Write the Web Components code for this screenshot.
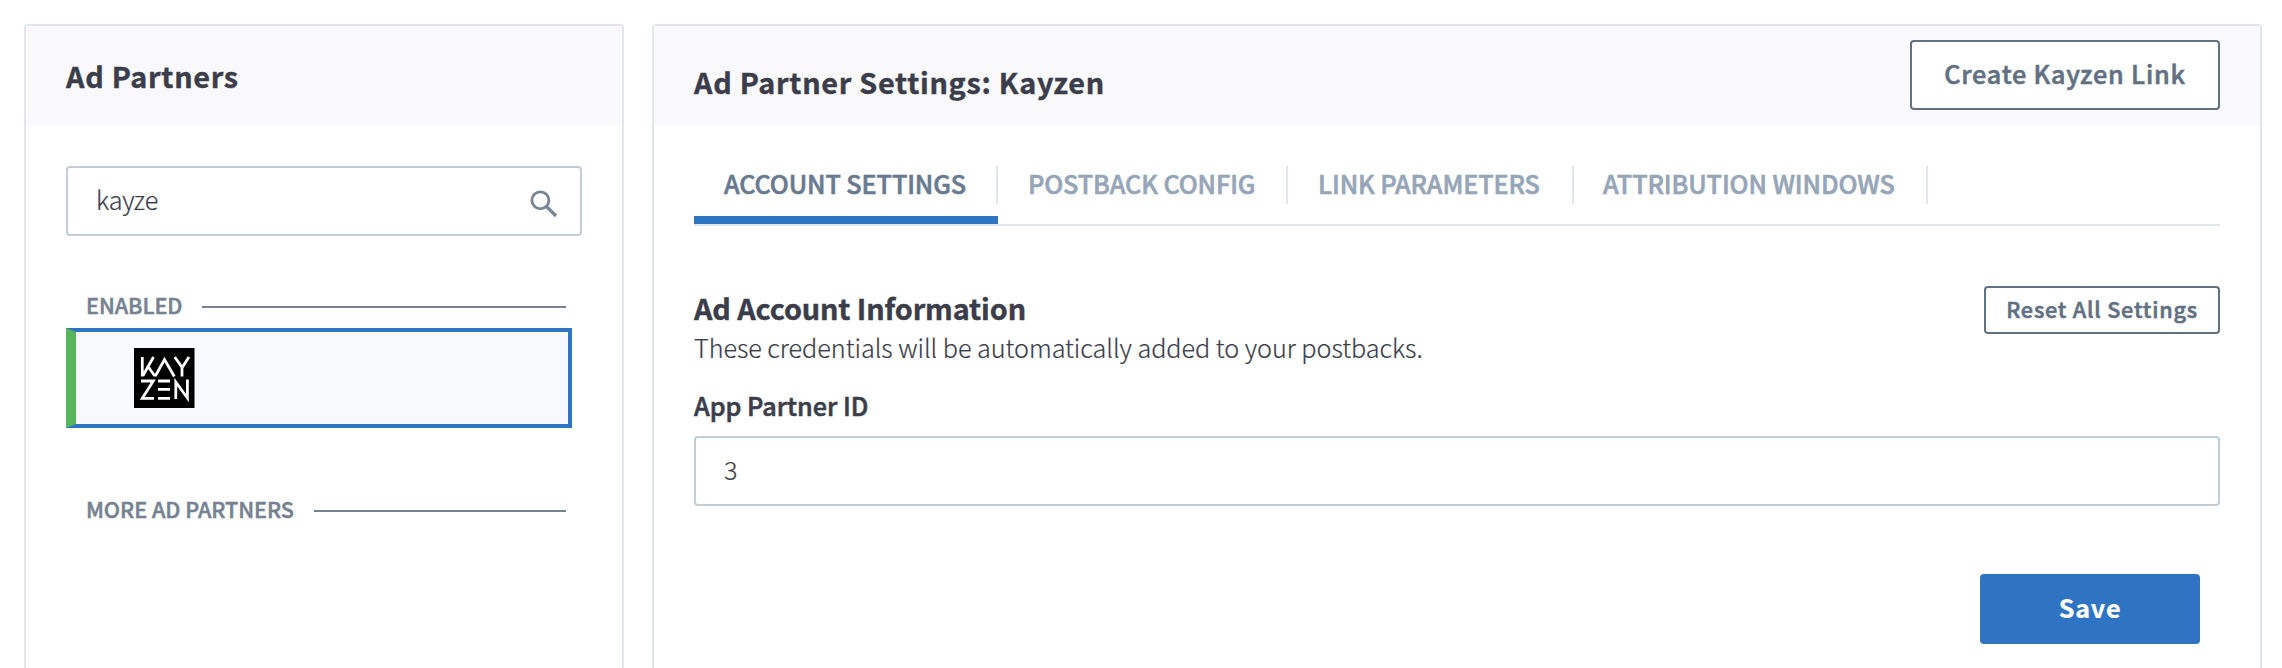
<!DOCTYPE html>
<html lang="en">
<head>
<meta charset="utf-8">
<title>Ad Partners</title>
<style>
html,body{margin:0;height:100%;overflow:hidden;background:#fff}
body{font-family:"Noto Sans CJK SC","Noto Sans",sans-serif;color:#3b3d4a}
</style>
</head>
<body>
<partner-app></partner-app>
<script>
const define=(name,css,html)=>customElements.define(name,class extends HTMLElement{
  constructor(){super();this.attachShadow({mode:'open'}).innerHTML=`<style>*{box-sizing:border-box}${css}</style>${html}`}
});

define('panel-card',`
:host{display:block;box-sizing:border-box;border:2px solid #e1e6ea;border-bottom:0;border-radius:4px 4px 0 0;height:644px}
header{height:100px;background:#f9f9fb;padding:0 40px;display:flex;align-items:center;justify-content:space-between;border-radius:2px 2px 0 0}
.title{font-size:28.8px;font-weight:700;line-height:42px;white-space:nowrap;letter-spacing:.7px;padding-top:var(--drop,0);-webkit-text-stroke:.4px}
.body{padding:40px 40px 0}`,
`<header><div class="title"><slot name="title"></slot></div><slot name="action"></slot></header><div class="body"><slot></slot></div>`);

define('text-box',`
:host{display:flex;box-sizing:border-box;height:70px;border:2px solid #c3cdd7;border-radius:4px;padding:0 22px 5px 28px;align-items:center;justify-content:space-between;font-size:25.2px;font-weight:300;line-height:36px;-webkit-text-stroke:.2px}
span{letter-spacing:-.2px}`,
`<span><slot></slot></span><slot name="icon"></slot>`);

define('search-icon',`:host{display:block;width:28px;height:28px;margin-top:10px}svg{display:block}`,
`<svg width="28" height="28" viewBox="0 0 28 28" fill="none" stroke="#768494"><circle cx="10.4" cy="10.3" r="8.5" stroke-width="2.8"/><path d="M16.4 16.4L26 26" stroke-width="3.300"/></svg>`);

define('section-label',`
:host{display:flex;height:30px;align-items:center;margin:0 16px 0 20px;color:#768191;font-size:21.6px;font-weight:500;line-height:30px;letter-spacing:-.05px}
span{padding-bottom:5px;white-space:nowrap;width:var(--w);-webkit-text-stroke:.5px}i{flex:1;height:2px;background:#768191}`,
`<span><slot></slot></span><i></i>`);

define('kayzen-logo',`:host{display:block;width:61px;height:60px}svg{display:block}`,
`<svg width="61" height="60" viewBox="0 0 61 60"><path d="M0 0h60.5v60H0z" fill="#000"/><g fill="none" stroke="#fff" stroke-width="2.8" stroke-linejoin="miter" stroke-miterlimit="8"><path d="M8.3 9v19.5M19.5 9L9 27.5M14 18.5l6.2 8.7h1.6L30.500 11.5l9.800 17M40.700 9l7.500 10.500L55 9M48 18.500v10"/><path d="M7 33h12.300L8.300 50.300H20M24 33h12M24 41.300h12M24 50.300h12M41.800 51V34l11.600 16V31.500"/></g></svg>`);

define('partner-item',`
:host{display:flex;box-sizing:border-box;height:100px;margin:6px 10px 0 0;border:4px solid #2f74c3;border-left:10px solid #57b65d;background:#f8f9fd;align-items:center;padding-left:58px}`,`<slot></slot>`);

define('tab-item',`
:host{display:flex;flex-direction:column;justify-content:space-between;width:var(--w);height:58px;color:#96a5b8}
:host([active]){color:#697a90}
div{height:38px;border-right:2px solid #e1e6ea;padding-left:var(--pad,30px);font-size:25.2px;font-weight:500;line-height:36px;white-space:nowrap;letter-spacing:-.1px;-webkit-text-stroke:.6px}
span{display:block;margin-top:-1px}
i{height:8px}:host([active]) i{background:#2f74c3}`,`<div><span><slot></slot></span></div><i></i>`);

define('tab-bar',`:host{display:flex;height:60px;box-sizing:border-box;border-bottom:2px solid #e1e6ea}`,`<slot></slot>`);

define('action-button',`
:host{display:flex;box-sizing:border-box;align-items:center;justify-content:center;width:var(--w);height:70px;border:2px solid #627083;border-radius:4px;background:#fff;color:#627083;font-size:25.2px;font-weight:500;line-height:36px;letter-spacing:.8px;white-space:nowrap;padding-bottom:4px;-webkit-text-stroke:.6px}
:host([small]){height:48px;font-size:21.6px;padding-bottom:3px}
:host([primary]){background:#2f74c3;border-color:#2f74c3;color:#fff;font-weight:700;-webkit-text-stroke:.2px}`,`<span><slot></slot></span>`);

define('account-form',`
:host{display:block;margin-top:60px}
.top{display:flex;justify-content:space-between;align-items:flex-start;height:79px}
h2{margin:0;font-size:28.8px;font-weight:700;line-height:43px;letter-spacing:-.12px;-webkit-text-stroke:.4px}
p{margin:0;font-size:25.2px;font-weight:300;line-height:36px;letter-spacing:-.04px;-webkit-text-stroke:.2px}
h2,p{white-space:nowrap}
label{display:block;margin:20px 0 11px;font-size:25.2px;font-weight:500;line-height:40px;-webkit-text-stroke:.6px}
.foot{display:flex;justify-content:flex-end;padding:68px 20px 0 0}`,
`<div class="top"><div><h2>Ad Account Information</h2><p>These credentials will be automatically added to your postbacks.</p></div>
<action-button small style="--w:236px">Reset All Settings</action-button></div>
<label>App Partner ID</label><text-box>3</text-box>
<div class="foot"><action-button primary style="--w:220px">Save</action-button></div>`);

define('partner-app',`
:host{display:grid;grid-template-columns:600px 1610px;gap:28px;padding:24px 0 0 24px}
.more{margin-top:68px}.enabled{margin-top:56px}`,
`<panel-card><span slot="title">Ad Partners</span>
<text-box>kayze<search-icon slot="icon"></search-icon></text-box>
<section-label class="enabled" style="--w:116px">ENABLED</section-label>
<partner-item><kayzen-logo></kayzen-logo></partner-item>
<section-label class="more" style="--w:228px">MORE AD PARTNERS</section-label></panel-card>
<panel-card style="--drop:12px"><span slot="title">Ad Partner Settings: Kayzen</span>
<action-button slot="action" style="--w:310px;margin-bottom:2px">Create Kayzen Link</action-button>
<tab-bar><tab-item active style="--w:304px">ACCOUNT SETTINGS</tab-item><tab-item style="--w:290px">POSTBACK CONFIG</tab-item><tab-item style="--w:286px">LINK PARAMETERS</tab-item><tab-item style="--w:354px;--pad:29px">ATTRIBUTION WINDOWS</tab-item></tab-bar>
<account-form></account-form></panel-card>`);
</script>
</body>
</html>
